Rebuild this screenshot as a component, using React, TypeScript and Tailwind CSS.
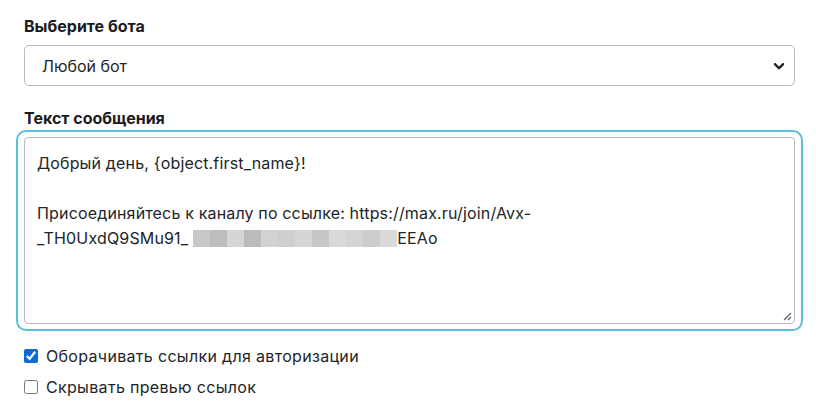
export default function App() {
  const mosaic = [
    "#c8c8c8", "#bdbdbd", "#d6d6d6", "#bbbbbb", "#d2d2d2", "#cfcfcf",
    "#d6d6d6", "#c7c7c7", "#d9d9d9", "#d4d4d4", "#cdcdcd", "#d9d9d9",
  ];

  return (
    <div className="min-h-[419px] bg-white pl-6 pr-[21px] pt-[14px] font-['Inter',sans-serif] text-[16px] text-[#212529]">
      <label className="mb-[7px] block text-[16px] font-bold leading-6 text-[#1b1b1f]">
        Выберите бота
      </label>
      <div className="relative">
        <select className="block h-[41px] w-full appearance-none rounded-[5px] border border-[#b9b8c6] bg-white pl-[17px] pr-10 text-[16px] text-[#212529] outline-none">
          <option>Любой бот</option>
        </select>
        <svg
          className="pointer-events-none absolute right-[10px] top-1/2 h-3 w-3 -translate-y-1/2"
          viewBox="0 0 16 16"
          fill="none"
          stroke="#1b1b1f"
          strokeWidth="3"
          strokeLinecap="round"
          strokeLinejoin="round"
        >
          <path d="M2.5 5.5 8 11l5.5-5.5" />
        </svg>
      </div>

      <label className="mb-0 mt-[20px] block text-[16px] font-bold leading-6 text-[#1b1b1f]">
        Текст сообщения
      </label>
      <div className="-mx-[8px] rounded-[10px] border-2 border-[#5bc0de] p-[5px] px-[6px]">
        <div className="relative h-[187px] rounded-[4px] border border-[#b9b8c6] bg-white px-[12px] pt-[13px] leading-[25px] tracking-[0.01em]">
          <div>Добрый день, {"{object.first_name}"}!</div>
          <div>&nbsp;</div>
          <div>Присоединяйтесь к каналу по ссылке: https://max.ru/join/Avx-</div>
          <div className="flex items-center">
            <span>_TH0UxdQ9SMu91_</span>
            <span className="ml-[5px] flex h-[17px]">
              {mosaic.map((c, i) => (
                <span key={i} className="block h-full w-[17px]" style={{ backgroundColor: c }} />
              ))}
            </span>
            <span>EEAo</span>
          </div>
          <svg
            className="absolute bottom-[2px] right-[2px] h-[10px] w-[10px]"
            viewBox="0 0 10 10"
            stroke="#5f5f66"
            strokeWidth="1.3"
          >
            <path d="M9 2 2 9M9 6 6 9" />
          </svg>
        </div>
      </div>

      <div className="mt-[15px] flex flex-col gap-[11px]">
        <label className="flex items-center gap-[8px] leading-5 tracking-[0.02em]">
          <input type="checkbox" defaultChecked className="m-0 h-[14px] w-[14px] accent-[#0b6bd6]" />
          <span>Оборачивать ссылки для авторизации</span>
        </label>
        <label className="flex items-center gap-[8px] leading-5 tracking-[0.02em]">
          <input type="checkbox" className="m-0 h-[14px] w-[14px] accent-[#0b6bd6]" />
          <span>Скрывать превью ссылок</span>
        </label>
      </div>
    </div>
  );
}
